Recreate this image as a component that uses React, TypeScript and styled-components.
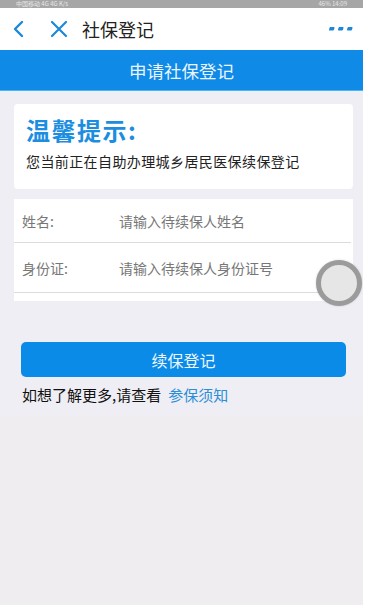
import styled, { createGlobalStyle } from "styled-components";

const GlobalStyle = createGlobalStyle`
  html, body {
    margin: 0;
    padding: 0;
    background: #ffffff;
  }
  body {
    font-family: "Noto Sans CJK SC", "Noto Sans", sans-serif;
  }
`;

const Screen = styled.div`
  width: 363px;
  height: 605px;
  display: flex;
  flex-direction: column;
  background: #efedf0;
  overflow: hidden;
`;

const StatusBar = styled.div`
  height: 8px;
  background: #a6a6a6;
  display: flex;
  align-items: center;
  justify-content: space-between;
  padding: 0 16px;
  font-size: 6px;
  line-height: 6px;
  color: #e6e6e6;
`;

const NavBar = styled.div`
  height: 42px;
  background: #ffffff;
  display: flex;
  align-items: center;
  padding: 0 10px 0 12px;
`;

const NavTitle = styled.div`
  font-size: 18px;
  color: #222;
  margin-left: 14px;
  flex: 1;
`;

const IconBtn = styled.div<{ $gap?: number }>`
  display: flex;
  align-items: center;
  margin-left: ${(p) => p.$gap ?? 0}px;
`;

const Banner = styled.div`
  height: 40px;
  background: #0f8ae6;
  border-bottom: 1px solid #49b8f2;
  color: #eaf5ff;
  font-size: 17.5px;
  display: flex;
  align-items: center;
  justify-content: center;
`;

const Body = styled.div`
  background: #efeef5;
  padding: 13px 10px 10px 14px;
  display: flex;
  flex-direction: column;
`;

const TipCard = styled.div`
  background: #fff;
  border-radius: 4px;
  height: 85px;
  padding: 11px 12px 0 12px;
  box-sizing: border-box;
`;

const TipTitle = styled.div`
  font-size: 24px;
  font-weight: 600;
  color: #1c8ee0;
  line-height: 30px;
  letter-spacing: 1.5px;
`;

const TipText = styled.div`
  font-size: 14px;
  color: #222;
  margin-top: 7px;
  line-height: 18px;
  letter-spacing: 0.4px;
`;

const FormCard = styled.div`
  background: #fff;
  margin-top: 10px;
  height: 102px;
  padding-right: 2px;
  box-sizing: border-box;
  position: relative;
`;

const Row = styled.div<{ $h: number }>`
  height: ${(p) => p.$h}px;
  display: flex;
  align-items: center;
  border-bottom: 1px solid #dcdcdc;
  font-size: 14px;
  padding-left: 8px;
`;

const Label = styled.div`
  width: 97px;
  color: #777;
`;

const Placeholder = styled.div`
  color: #777;
`;

const SubmitButton = styled.div`
  margin: 41px 7px 0 7px;
  height: 35px;
  border-radius: 5px;
  background: #0a8be8;
  color: #eef7ff;
  font-size: 16px;
  display: flex;
  align-items: center;
  justify-content: center;
`;

const MoreText = styled.div`
  margin: 8px 0 0 8px;
  font-size: 15px;
  color: #111;
  line-height: 20px;
`;

const MoreLink = styled.span`
  color: #2b8fd6;
  margin-left: 7px;
`;

const FloatBall = styled.div`
  position: absolute;
  right: -9px;
  top: 61px;
  width: 36px;
  height: 36px;
  border-radius: 50%;
  border: 5px solid #9b9b9b;
  background: #e6e6e6;
  box-shadow: 0 0 2px rgba(0, 0, 0, 0.2);
`;

export default function App() {
  return (
    <>
      <GlobalStyle />
      <Screen>
        <StatusBar>
          <span>中国移动 4G 4G K/s</span>
          <span>46% 14:09</span>
        </StatusBar>
        <NavBar>
          <IconBtn>
            <svg width="14" height="18" viewBox="0 0 14 18">
              <path d="M10 2 L3 9 L10 16" stroke="#1d88d8" strokeWidth="2.4" fill="none" strokeLinecap="round" strokeLinejoin="round" />
            </svg>
          </IconBtn>
          <IconBtn $gap={24}>
            <svg width="18" height="18" viewBox="0 0 18 18">
              <path d="M2 2 L16 16 M16 2 L2 16" stroke="#1d88d8" strokeWidth="2.2" fill="none" strokeLinecap="round" />
            </svg>
          </IconBtn>
          <NavTitle>社保登记</NavTitle>
          <IconBtn>
            <svg width="24" height="6" viewBox="0 0 24 6">
              <rect x="1" y="1" width="5" height="3.5" rx="0.8" fill="#1d88d8" transform="skewX(-15)" />
              <rect x="10" y="1" width="5" height="3.5" rx="0.8" fill="#1d88d8" transform="skewX(-15)" />
              <rect x="19" y="1" width="5" height="3.5" rx="0.8" fill="#1d88d8" transform="skewX(-15)" />
            </svg>
          </IconBtn>
        </NavBar>
        <Banner>申请社保登记</Banner>
        <Body>
          <TipCard>
            <TipTitle>温馨提示:</TipTitle>
            <TipText>您当前正在自助办理城乡居民医保续保登记</TipText>
          </TipCard>
          <FormCard>
            <Row $h={43}>
              <Label>姓名:</Label>
              <Placeholder>请输入待续保人姓名</Placeholder>
            </Row>
            <Row $h={49}>
              <Label>身份证:</Label>
              <Placeholder>请输入待续保人身份证号</Placeholder>
            </Row>
            <FloatBall />
          </FormCard>
          <SubmitButton>续保登记</SubmitButton>
          <MoreText>
            如想了解更多,请查看<MoreLink>参保须知</MoreLink>
          </MoreText>
        </Body>
      </Screen>
    </>
  );
}
